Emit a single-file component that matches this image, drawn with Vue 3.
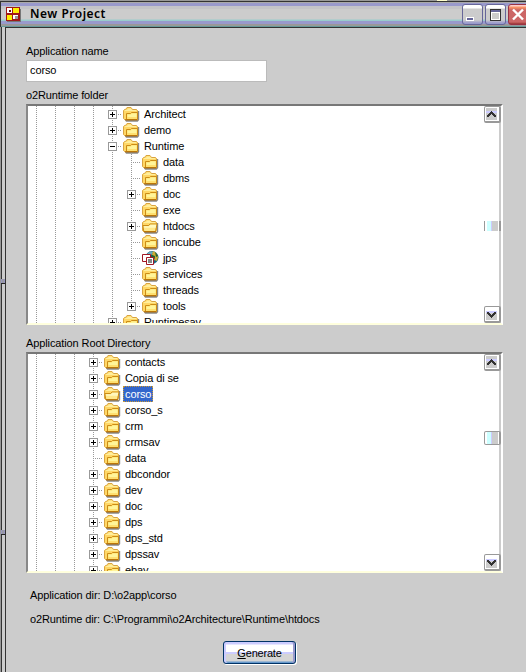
<script setup>
const runtimeTree = [
  { name: 'Architect', depth: 4, box: '+' },
  { name: 'demo', depth: 4, box: '+' },
  { name: 'Runtime', depth: 4, box: '-' },
  { name: 'data', depth: 5 },
  { name: 'dbms', depth: 5 },
  { name: 'doc', depth: 5, box: '+' },
  { name: 'exe', depth: 5 },
  { name: 'htdocs', depth: 5, box: '+', open: true },
  { name: 'ioncube', depth: 5 },
  { name: 'jps', depth: 5, web: true },
  { name: 'services', depth: 5 },
  { name: 'threads', depth: 5 },
  { name: 'tools', depth: 5, box: '+', last: true },
  { name: 'Runtimesav', depth: 4, box: '+' },
]
const rootTree = [
  'contacts', 'Copia di se', 'corso', 'corso_s', 'crm', 'crmsav', 'data',
  'dbcondor', 'dev', 'doc', 'dps', 'dps_std', 'dpssav', 'ebay',
].map((name) => ({
  name,
  depth: 3,
  box: name === 'data' ? '' : '+',
  open: name === 'corso',
  selected: name === 'corso',
}))
const panels = [
  { title: 'o2Runtime folder', rows: runtimeTree, kind: 'first' },
  { title: 'Application Root Directory', rows: rootTree, kind: 'second' },
]
</script>

<template>
  <div class="window">
    <div class="desk"><i></i></div>
    <header class="titlebar">
      <svg class="appicon" width="15" height="15" viewBox="0 0 15 15" shape-rendering="crispEdges">
        <path fill="#777" d="M1 14h13V2h1v13H1z" />
        <path fill="#a01818" d="M0 0h14v14H0z" />
        <path fill="#fff" d="M1 1h5v5H1z" />
        <path fill="#701010" d="M3 3h2v2H3z" />
        <path fill="#ffee00" d="M7 1h6v5H7zM1 8h5v5H1z" />
        <path fill="#fff" d="M7 8h5v4H7z" />
        <path fill="#999" d="M9 9h3v3H9z" />
      </svg>
      <h1>New Project</h1>
      <div class="controls">
        <span class="ctl">
          <svg width="21" height="21" shape-rendering="crispEdges"><path fill="#fff" d="M4 13h8v4H4z" /><path fill="#666699" d="M5 14h6v2H5z" /></svg>
        </span>
        <span class="ctl">
          <svg width="21" height="21" shape-rendering="crispEdges"><path fill="#333" d="M5 5h11v12H5z" /><path fill="#666699" d="M6 6h9v2H6z" /><path fill="#ccc" d="M6 8h9v8H6z" /><path fill="none" stroke="#fff" d="M6.500 15.500v-7h8v7z" /></svg>
        </span>
        <span class="ctl close">
          <svg width="21" height="21"><path fill="none" stroke="#fff" stroke-width="2.400" d="M5 5.500l10 10M15 5.500l-10 10" /></svg>
        </span>
      </div>
    </header>
    <div class="body">
      <aside class="edge"><i></i><i></i></aside>
      <main>
        <label class="caption">Application name</label>
        <div class="field">corso</div>
        <section v-for="p in panels" :key="p.kind" :class="p.kind">
          <label class="caption">{{ p.title }}</label>
          <div class="treebox">
            <div class="rows">
              <div v-for="r in p.rows" :key="r.name" class="row">
                <svg v-for="n in r.depth" :key="n" class="cell" width="19" height="16">
                  <path class="dots" d="M9.500 0v16" />
                </svg>
                <svg class="cell" width="19" height="16" shape-rendering="crispEdges">
                  <path class="dots" :d="r.last ? 'M9.500 0v8' : 'M9.500 0v16'" />
                  <path class="dots" d="M9 8.500h10" />
                  <template v-if="r.box">
                    <rect x="5.500" y="4.500" width="8" height="8" fill="#fff" stroke="#999" />
                    <path stroke="#000" d="M7 8.500h5" />
                    <path v-if="r.box === '+'" stroke="#000" d="M9.500 6v5" />
                  </template>
                </svg>
                <svg v-if="r.web" class="cell" width="20" height="16" viewBox="0 0 20 16">
                  <circle cx="11" cy="7.500" r="6.500" fill="#176780" />
                  <path fill="#68a8bc" d="M6 4l3-3 4 1-3 3z" />
                  <path fill="#d0ad32" d="M12 1l3 2 2 4-1 4-3-1 1-3-3-2z" />
                  <path fill="#25632b" d="M11 5l3 1-1 4-3-3zM14 2l3 4-2 1z" />
                  <path fill="#fff" stroke="#a01825" d="M1.500 4.500h8v7h-8z" />
                  <path fill="#fff" stroke="#a01825" d="M5.500 7.500h7v7h-7z" />
                  <path fill="#888" d="M7 9h4v4H7z" />
                </svg>
                <svg v-else class="cell" width="20" height="16" viewBox="0 0 20 16">
                  <path fill="#8a8a8a" d="M3 14h13V5h1.200v9l-1.500 1.700H4z" />
                  <path fill="#ffd766" stroke="#d9a441" d="M1.500 12.500v-8l1-1h1l1.500-2h4l1.500 2h4l1 1v8l-1 1h-12z" />
                  <path fill="#ffee9c" d="M3 4h2l1-1.500h3L10 4h4v1H3z" />
                  <template v-if="r.open">
                    <path fill="#ffe88a" stroke="#cc8c16" d="M2.800 13.500l-1-6h6l1.200-1.500h7l-1.500 7.500z" />
                    <path fill="#fff8bd" d="M3 8.200h5l1.200-1.500h6l-.5 3H3.300z" />
                  </template>
                  <template v-else>
                    <path fill="#ffe070" stroke="#cc8c16" d="M4.500 13.500v-6h4l1-1h6v7z" />
                    <path fill="#fff59a" d="M5.500 8.500h3.500l1-1h4.500v3.500h-9z" />
                  </template>
                  <path stroke="#b06a00" d="M3 13.900h12.500" />
                </svg>
                <span class="name" :class="{ selected: r.selected }">{{ r.name }}</span>
              </div>
            </div>
            <div class="scroll">
              <span class="sbtn"><svg width="13" height="13" shape-rendering="crispEdges"><path fill="#ccc" d="M1 1h11v12H1z" /><path fill="#ccccff" d="M1 4h11v2H1z" /><path fill="#333" d="M6 4h1v1h1v1h1v1h1v1h1v2H9V9H8V8H7V7H6v1H5v1H4v1H2V8h1V7h1V6h1V5h1z" /></svg></span>
              <span class="thumb"></span>
              <span class="sbtn"><svg width="13" height="13" shape-rendering="crispEdges"><path fill="#ccc" d="M1 4h11v9H1z" /><path fill="#ccccff" d="M1 4h11v2H1z" /><path fill="#333" d="M6 11h1v-1h1V9h1V8h1V7h1V5H9v1H8v1H7v1H6V7H5V6H4V5H2v2h1v1h1v1h1v1h1z" /></svg></span>
            </div>
          </div>
        </section>
        <p class="info app">Application dir: D:\o2app\corso</p>
        <p class="info run">o2Runtime dir: C:\Programmi\o2Architecture\Runtime\htdocs</p>
        <button><u>G</u>enerate</button>
      </main>
    </div>
  </div>
</template>

<style>
body { margin: 0; background: #ccc; overflow: hidden; }
</style>
<style scoped>
* { box-sizing: border-box; }
.window { width: 526px; height: 672px; overflow: hidden; background: #ccc; font: 11px/16px "Liberation Sans", Arial, sans-serif; letter-spacing: -0.11px; color: #000; }
.desk { height: 1px; background: #999; display: flex; }
.desk i { width: 10px; height: 1px; margin-left: 437px; background: #ffffcc; }
.titlebar { height: 26px; display: flex; align-items: flex-start; padding: 6px 0 0 5px; border-left: 1px solid #333; background: linear-gradient(#333 0 1px, #aaa 1px 2px, #9999cc 2px 5px, #c4c4c8 5px 8px, #ccc 8px 18px, #99cccc 19px 20px, #9999cc 20px 23px, #999 23px 25px, #669999 25px); }
.appicon { flex: none; }
h1 { margin: -2px 0 0 9px; font: 600 12px/18px "Noto Sans", sans-serif; letter-spacing: 0.5px; white-space: nowrap; }
.controls { display: flex; gap: 2px; margin: -3px 0 0 auto; width: 64px; flex: none; }
.ctl { flex: none; width: 21px; height: 21px; border: 1px solid #666699; border-radius: 3px; background: linear-gradient(#fff 0 3px, #ccc 4px 15px, #9999cc 18px); overflow: hidden; }
.ctl svg { display: block; margin: -1px; }
.close { border-color: #993344; background: linear-gradient(#ffcccc 0 1px, #ff9966 2px, #cc6666 5px 17px, #993333); }
.body { height: 645px; display: flex; }
.edge { width: 5px; flex: none; border-left: 1px solid #999; background: linear-gradient(90deg, #333 0 1px, #ccc 1px); display: flex; flex-direction: column; }
.edge i { width: 4px; height: 5px; margin-top: 252px; border-bottom: 1px solid #222; background: linear-gradient(90deg, #99c, #999 50%, #99c); }
.edge i + i { margin-top: 246px; }
main { width: 521px; border-top: 1px solid #333; border-left: 1px solid #333; padding: 15px 0 0 20px; }
.caption { display: block; height: 16px; white-space: nowrap; }
.field { width: 241px; height: 22px; margin-top: 1px; padding: 1px 3px; background: #fff; border: 1px solid #bbb; }
.first { margin-top: 5px; }
.first .caption, .second .caption { height: 17px; }
.second { margin-top: 10px; }
.treebox { width: 477px; height: 221px; display: flex; background: #fff; border: 2px solid; border-color: #777 #fff #ffffdd #888; overflow: hidden; }
.rows { flex: 1; margin-left: -1px; overflow: hidden; }
.row { height: 16px; display: flex; white-space: nowrap; }
.cell { flex: none; display: block; }
.dots { fill: none; stroke: #999; stroke-dasharray: 1 1; shape-rendering: crispEdges; }
.name { height: 16px; padding: 0 2px; line-height: 16px; }
.selected { background: #3366cc; color: #fff; outline: 1px dotted #cc9933; outline-offset: -1px; }
.scroll { width: 17px; flex: none; display: flex; flex-direction: column; background: linear-gradient(90deg, #fff 15px, #ccc 15px); }
.sbtn { width: 17px; height: 17px; border: 1px solid #999; border-right-width: 2px; border-bottom-width: 2px; border-radius: 2px; background: #fff; flex: none; }
.sbtn svg { display: block; }
.sbtn:last-child { margin-top: auto; }
.thumb { width: 17px; height: 14px; margin-top: 60px; border: 1px solid #999; border-right-width: 2px; border-radius: 2px; background: linear-gradient(90deg, #fff 2px, #ccffff 2px 6px, #ccccff 6px 7px, #ccc 7px 13px, #fff 13px); }
.first .thumb { height: 10px; margin-top: 98px; border-top: 0; border-bottom: 0; border-radius: 0; }
.info { margin: 0 0 0 4px; white-space: nowrap; }
.app { margin-top: 14px; }
.run { margin-top: 8px; }
button { display: block; width: 73px; height: 23px; margin: 14px 0 0 197px; padding: 0; border: 1px solid #003366; border-radius: 3px; font: inherit; letter-spacing: -0.2px; color: #000; background: linear-gradient(#ccccff 0 2px, #fff 3px 10px, #ccccff 10px 12px, #d5d5d5 12px 19px, #6699cc 20px); box-shadow: inset 2px 0 #ccccff, inset -2px 0 #99c, 1px 1px #fff; }
</style>
